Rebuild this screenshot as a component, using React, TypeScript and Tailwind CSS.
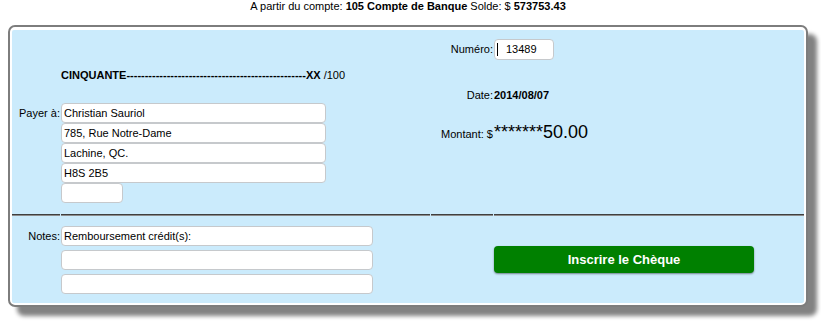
import React from "react";

const inputCls =
  "h-[20px] rounded-[4px] border border-[#c6c9cc] bg-white pl-[2px] text-[11px] leading-[18px] text-black";

const payee = ["Christian Sauriol", "785, Rue Notre-Dame", "Lachine, QC.", "H8S 2B5"];
const notes = ["Remboursement crédit(s):", "", ""];

const Rule = () => (
  <div className="flex h-[2px] flex-col">
    <div className="h-px bg-[#3f3f3f]" />
    <div className="h-px bg-[#8c8c8c]" />
  </div>
);

const App: React.FC = () => {
  return (
    <div className="min-h-[323px] bg-white font-['Liberation_Sans',Arial,sans-serif] text-[11px] text-black">
      <div className="ml-[8px] w-[800px] text-center leading-[13px]">
        A partir du compte: <b>105 Compte de Banque</b> Solde: $ <b>573753.43</b>
      </div>

      {/* cheque body */}
      <div className="ml-[8px] mt-[12px] w-[800px] rounded-[7px] border-2 border-[#7d7d7d] bg-white p-[2px] pt-[3px] shadow-[9px_9px_4px_#828282]">
        <div className="grid grid-cols-[48px_369px_62px_1fr] gap-x-px rounded-[2px] bg-[#cbebfc]">
          {/* top left: amount in words + payee */}
          <div className="col-span-2 flex h-[184px] flex-col">
            <div className="ml-[49px] mt-[39px] font-bold leading-[13px]">
              CINQUANTE-------------------------------------------------XX{" "}
              <span className="font-normal">/100</span>
            </div>
            <div className="mt-[21px] grid grid-cols-[48px_1fr] gap-x-px">
              <div className="text-right leading-[20px]">Payer à:</div>
              <div className="flex flex-col">
                {payee.map((line) => (
                  <div key={line} className={`${inputCls} w-[265px]`}>
                    {line}
                  </div>
                ))}
                <div className={`${inputCls} w-[62px]`} />
              </div>
            </div>
          </div>

          {/* top right: number, date, amount */}
          <div className="col-span-2 grid grid-cols-[62px_1fr] content-start gap-x-px pt-[9px]">
            <div className="text-right leading-[21px]">Numéro:</div>
            <div>
              <div className="flex h-[21px] w-[60px] items-center rounded-[4px] border border-[#c6c9cc] bg-white pl-[2px]">
                <span className="h-[13px] w-px bg-black" />
                <span className="ml-[8px]">13489</span>
              </div>
            </div>

            <div className="mt-[29px] text-right leading-[13px]">Date:</div>
            <div className="mt-[29px] font-bold leading-[13px]">2014/08/07</div>

            <div className="col-span-2 mt-[20px] grid grid-cols-[62px_1fr] items-baseline gap-x-px">
              <div className="whitespace-nowrap text-right leading-[21px]">Montant: $</div>
              <div className="text-[18px] leading-[21px]">*******50.00</div>
            </div>
          </div>

          {/* divider */}
          <Rule />
          <Rule />
          <Rule />
          <Rule />

          {/* notes */}
          <div className="col-span-2 grid h-[87px] grid-cols-[48px_1fr] content-start gap-x-px pt-[10px]">
            <div className="text-right leading-[20px]">Notes:</div>
            <div className="flex flex-col gap-[4px]">
              {notes.map((line, i) => (
                <div key={i} className={`${inputCls} w-[312px]`}>
                  {line}
                </div>
              ))}
            </div>
          </div>

          {/* submit */}
          <div className="col-span-2 grid grid-cols-[62px_1fr] items-center gap-x-px">
            <div />
            <button className="h-[27px] w-[260px] rounded-[4px] bg-[#008000] text-[13px] font-bold text-white shadow-[0_1px_2px_rgba(0,0,0,0.45)]">
              Inscrire le Chèque
            </button>
          </div>
        </div>
      </div>
    </div>
  );
};

export default App;
